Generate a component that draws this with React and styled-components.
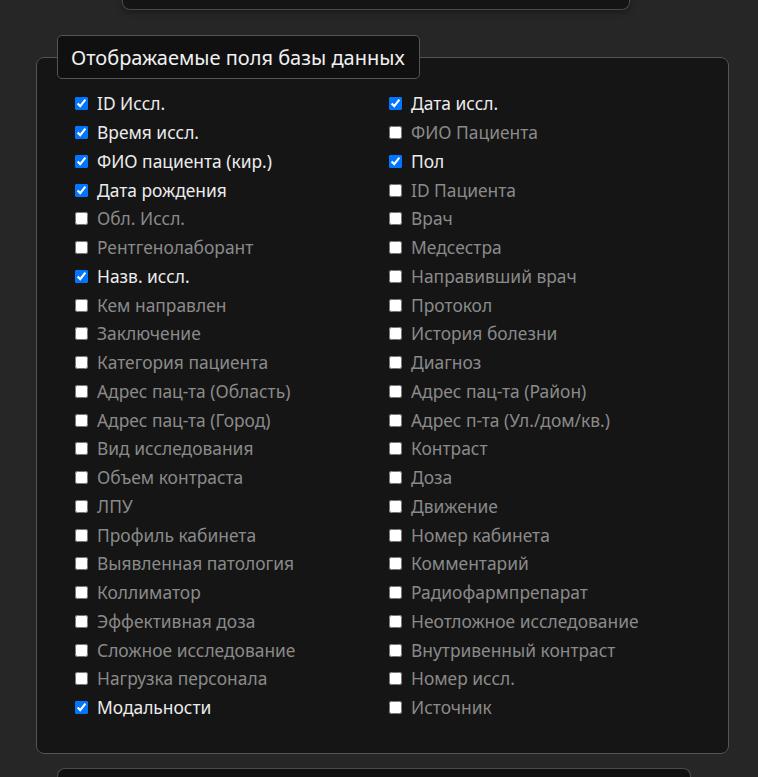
import React from "react";
import styled, { createGlobalStyle } from "styled-components";

const Global = createGlobalStyle`
  html, body { margin: 0; padding: 0; background: #262626; }
  body { font-family: "Noto Sans", "DejaVu Sans", sans-serif; }
`;

const Page = styled.div`
  width: 693px;
  margin-left: 36px;
  display: flex;
  flex-direction: column;
`;

const TopCard = styled.div`
  margin-left: 86px;
  width: 506px;
  height: 9px;
  background: #141414;
  border: 1px solid #4a4a4a;
  border-top: none;
  border-radius: 0 0 8px 8px;
  box-shadow: 0 2px 6px rgba(0, 0, 0, 0.35);
`;

const Fieldset = styled.fieldset`
  margin: 25px 0 0 0;
  padding: 0 0 0 20px;
  min-width: 0;
  background: #151515;
  border: 1px solid #555;
  border-radius: 8px;
  height: 719px;
  box-sizing: border-box;
`;

const Legend = styled.legend`
  box-sizing: border-box;
  height: 44px;
  padding: 0 14px 0 13px;
  display: flex;
  align-items: center;
  background: #101010;
  border: 1px solid #555;
  border-radius: 5px;
  color: #f0f0f0;
  font-size: 20px;
`;

const Grid = styled.div`
  display: grid;
  grid-template-columns: 314px 1fr;
  grid-auto-flow: column;
  grid-template-rows: repeat(22, 28.76px);
  padding: 10px 0 0 14px;
`;

const Label = styled.label`
  display: flex;
  align-items: center;
  gap: 6px;
  font-size: 17.4px;
  color: ${(p) => (p.$on ? "#ececec" : "#8a8a8a")};
  white-space: nowrap;
`;

const Box = styled.input`
  width: 13px;
  height: 13px;
  margin: 1px 3px 0 4px;
`;

const BottomCard = styled.div`
  margin: 14px 0 0 21px;
  width: 634px;
  height: 20px;
  background: #101010;
  border: 1px solid #4a4a4a;
  border-bottom: none;
  border-radius: 8px 8px 0 0;
  box-sizing: border-box;
`;

const left = [
  ["ID Иссл.", true],
  ["Время иссл.", true],
  ["ФИО пациента (кир.)", true],
  ["Дата рождения", true],
  ["Обл. Иссл.", false],
  ["Рентгенолаборант", false],
  ["Назв. иссл.", true],
  ["Кем направлен", false],
  ["Заключение", false],
  ["Категория пациента", false],
  ["Адрес пац-та (Область)", false],
  ["Адрес пац-та (Город)", false],
  ["Вид исследования", false],
  ["Объем контраста", false],
  ["ЛПУ", false],
  ["Профиль кабинета", false],
  ["Выявленная патология", false],
  ["Коллиматор", false],
  ["Эффективная доза", false],
  ["Сложное исследование", false],
  ["Нагрузка персонала", false],
  ["Модальности", true],
];

const right = [
  ["Дата иссл.", true],
  ["ФИО Пациента", false],
  ["Пол", true],
  ["ID Пациента", false],
  ["Врач", false],
  ["Медсестра", false],
  ["Направивший врач", false],
  ["Протокол", false],
  ["История болезни", false],
  ["Диагноз", false],
  ["Адрес пац-та (Район)", false],
  ["Адрес п-та (Ул./дом/кв.)", false],
  ["Контраст", false],
  ["Доза", false],
  ["Движение", false],
  ["Номер кабинета", false],
  ["Комментарий", false],
  ["Радиофармпрепарат", false],
  ["Неотложное исследование", false],
  ["Внутривенный контраст", false],
  ["Номер иссл.", false],
  ["Источник", false],
];

function Item({ text, on }) {
  return (
    <Label $on={on}>
      <Box type="checkbox" defaultChecked={on} />
      {text}
    </Label>
  );
}

export default function App() {
  return (
    <>
      <Global />
      <Page>
        <TopCard />
        <Fieldset>
          <Legend>Отображаемые поля базы данных</Legend>
          <Grid>
            {[...left, ...right].map(([t, on], i) => (
              <Item key={i} text={t} on={on} />
            ))}
          </Grid>
        </Fieldset>
        <BottomCard />
      </Page>
    </>
  );
}
